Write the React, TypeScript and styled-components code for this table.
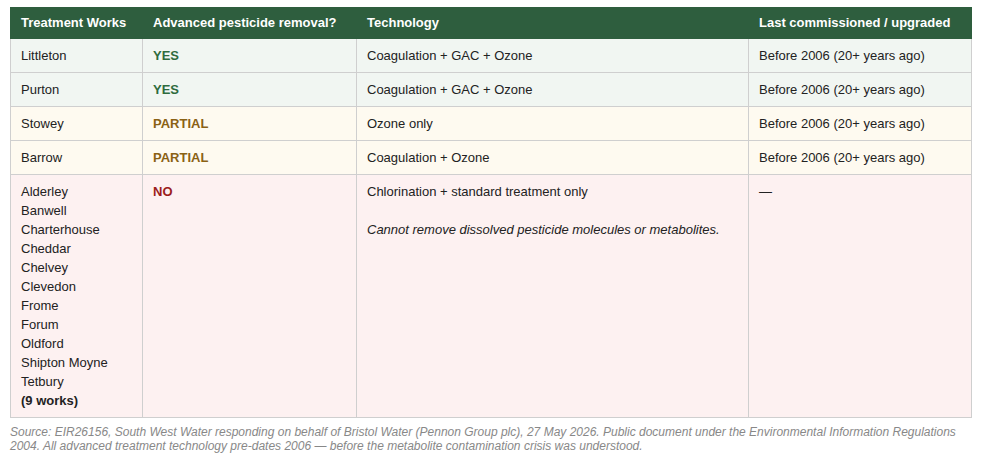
import React from "react";
import styled, { createGlobalStyle } from "styled-components";

const Global = createGlobalStyle`
  html, body { margin: 0; padding: 0; background: #ffffff; }
  body { font-family: "Liberation Sans", Arial, sans-serif; color: #222; }
`;

const Page = styled.div`
  padding: 7px 31px 0 10px;
  width: 961px;
`;

const Table = styled.table`
  width: 961px;
  border-collapse: collapse;
  table-layout: fixed;
  font-size: 13px;
  line-height: 19px;
`;

const Th = styled.th`
  background: #2e5e3e;
  color: #ffffff;
  font-weight: bold;
  text-align: left;
  padding: 5px 10px 6px;
  border: 1px solid #2e5e3e;
`;

type Tone = "yes" | "partial" | "no";

const bg: Record<Tone, string> = {
  yes: "#f1f6f2",
  partial: "#fefaf0",
  no: "#fdf1f1",
};

const fg: Record<Tone, string> = {
  yes: "#2e6b3e",
  partial: "#8a6114",
  no: "#9b1c1c",
};

const Tr = styled.tr<{ $tone: Tone }>`
  background: ${(p) => bg[p.$tone]};
`;

const Td = styled.td`
  padding: 7px 10px;
  border: 1px solid #cfcfcf;
  vertical-align: top;
  color: #222;
`;

const Status = styled.span<{ $tone: Tone }>`
  font-weight: bold;
  color: ${(p) => fg[p.$tone]};
`;

const Names = styled.div`
  display: flex;
  flex-direction: column;
`;

const Count = styled.strong`
  font-weight: bold;
`;

const Note = styled.p`
  margin: 19px 0 0;
  font-style: italic;
`;

const Source = styled.p`
  margin: 7px 0 0;
  font-size: 12px;
  line-height: 14px;
  font-style: italic;
  color: #888;
  padding-right: 12px;
`;

const rows: { name: string; tone: Tone; label: string; tech: string; date: string }[] = [
  { name: "Littleton", tone: "yes", label: "YES", tech: "Coagulation + GAC + Ozone", date: "Before 2006 (20+ years ago)" },
  { name: "Purton", tone: "yes", label: "YES", tech: "Coagulation + GAC + Ozone", date: "Before 2006 (20+ years ago)" },
  { name: "Stowey", tone: "partial", label: "PARTIAL", tech: "Ozone only", date: "Before 2006 (20+ years ago)" },
  { name: "Barrow", tone: "partial", label: "PARTIAL", tech: "Coagulation + Ozone", date: "Before 2006 (20+ years ago)" },
];

const noWorks = [
  "Alderley",
  "Banwell",
  "Charterhouse",
  "Cheddar",
  "Chelvey",
  "Clevedon",
  "Frome",
  "Forum",
  "Oldford",
  "Shipton Moyne",
  "Tetbury",
];

export default function App() {
  return (
    <Page>
      <Global />
      <Table>
        <colgroup>
          <col style={{ width: 132 }} />
          <col style={{ width: 214 }} />
          <col style={{ width: 392 }} />
          <col style={{ width: 223 }} />
        </colgroup>
        <thead>
          <tr>
            <Th>Treatment Works</Th>
            <Th>Advanced pesticide removal?</Th>
            <Th>Technology</Th>
            <Th>Last commissioned / upgraded</Th>
          </tr>
        </thead>
        <tbody>
          {rows.map((r) => (
            <Tr key={r.name} $tone={r.tone}>
              <Td>{r.name}</Td>
              <Td>
                <Status $tone={r.tone}>{r.label}</Status>
              </Td>
              <Td>{r.tech}</Td>
              <Td>{r.date}</Td>
            </Tr>
          ))}
          <Tr $tone="no">
            <Td>
              <Names>
                {noWorks.map((n) => (
                  <span key={n}>{n}</span>
                ))}
                <Count>(9 works)</Count>
              </Names>
            </Td>
            <Td>
              <Status $tone="no">NO</Status>
            </Td>
            <Td>
              Chlorination + standard treatment only
              <Note>Cannot remove dissolved pesticide molecules or metabolites.</Note>
            </Td>
            <Td>—</Td>
          </Tr>
        </tbody>
      </Table>
      <Source>
        Source: EIR26156, South West Water responding on behalf of Bristol Water (Pennon Group plc), 27 May 2026. Public
        document under the Environmental Information Regulations 2004. All advanced treatment technology pre-dates 2006 —
        before the metabolite contamination crisis was understood.
      </Source>
    </Page>
  );
}
